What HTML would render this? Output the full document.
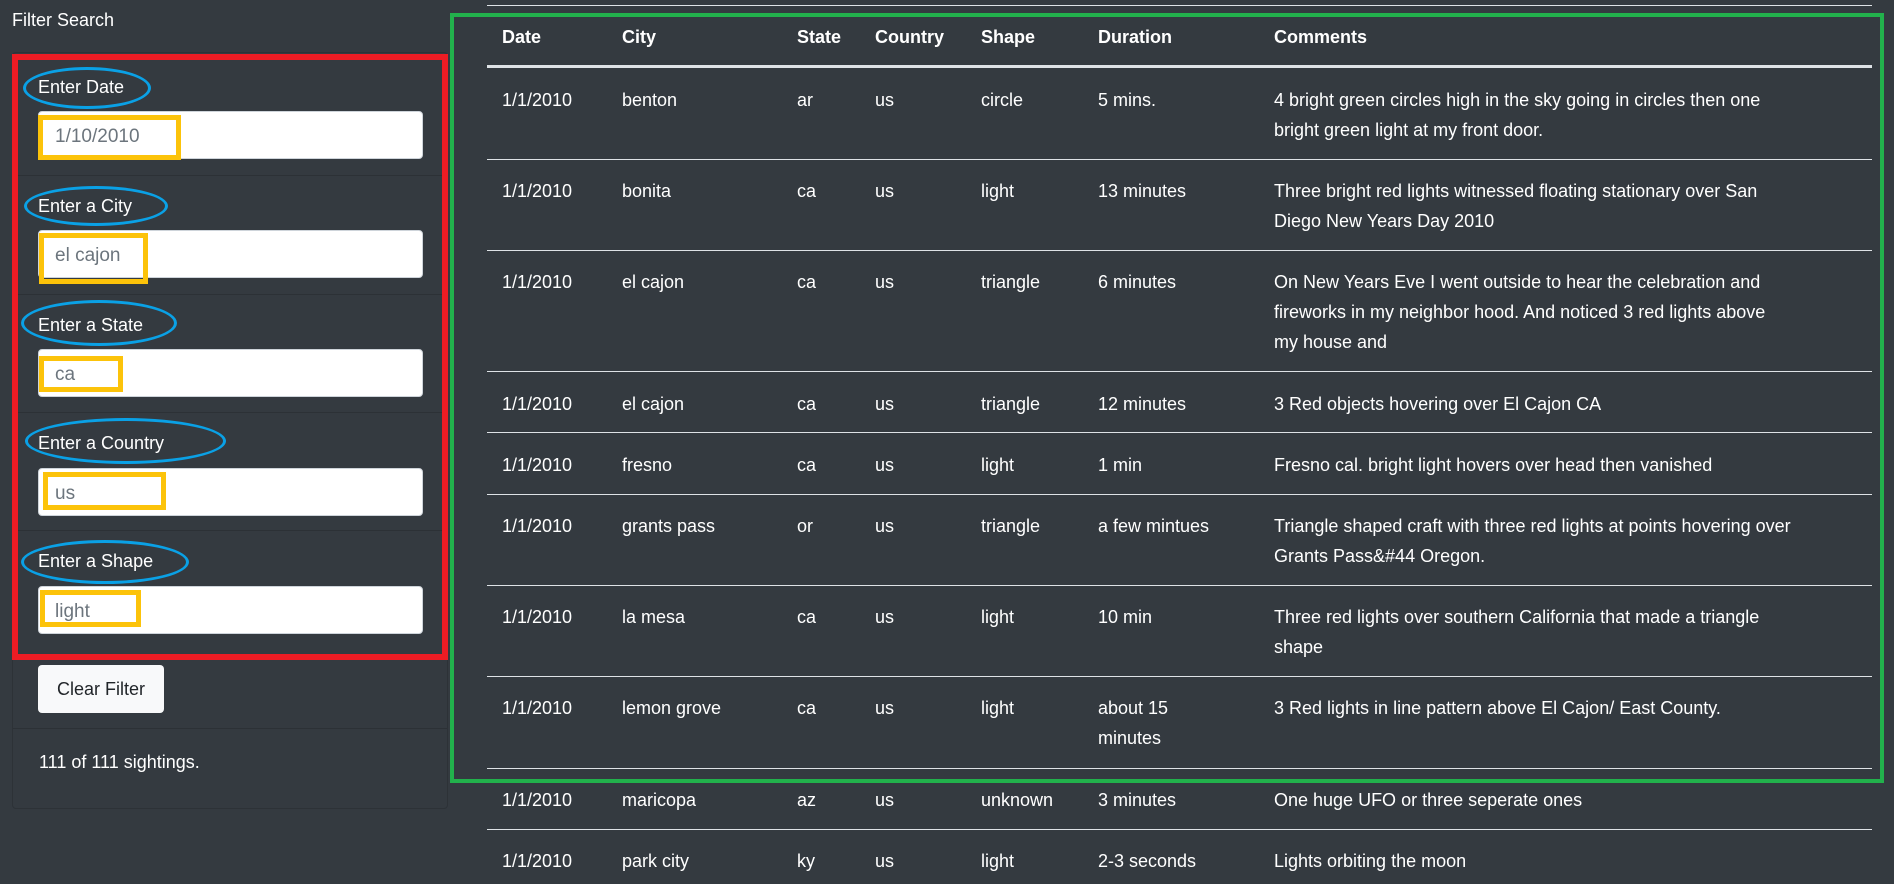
<!DOCTYPE html>
<html><head><meta charset="utf-8"><style>
*{box-sizing:border-box;margin:0;padding:0}
body{width:1894px;height:884px;background:#343a40;font-family:"Liberation Sans",sans-serif;color:#fff;position:relative;overflow:hidden;font-size:18px}
.a{position:absolute}
.card{left:12px;top:52px;width:436px;height:757px;border:1px solid #2d3237;border-radius:4px}
.div{left:13px;width:434px;height:1px;background:#2c3136}
.lbl{left:38px;font-size:18px;line-height:22px}
.inp{left:38px;width:385px;height:48px;background:#fff;border:1px solid #ced4da;border-radius:4px}
.val{color:#6c757d;font-size:19px}
.ell{border:3px solid #0aa1e6;border-radius:50%}
.yb{border:5px solid #fcc30a}
.hl{left:487px;width:1385px;height:1px;background:#dee2e6}
.c{position:absolute;line-height:30px;white-space:nowrap}
.m{width:560px}
</style></head><body>
<div class="a" style="left:12px;top:10px;font-size:18px">Filter Search</div>
<div class="a card"></div>
<div class="a div" style="top:175px"></div>
<div class="a div" style="top:294px"></div>
<div class="a div" style="top:412px"></div>
<div class="a div" style="top:530px"></div>
<div class="a div" style="top:728px"></div>

<div class="a lbl" style="top:76px">Enter Date</div>
<div class="a lbl" style="top:195px">Enter a City</div>
<div class="a lbl" style="top:314px">Enter a State</div>
<div class="a lbl" style="top:432px">Enter a Country</div>
<div class="a lbl" style="top:550px">Enter a Shape</div>

<div class="a inp" style="top:111px"></div>
<div class="a inp" style="top:230px"></div>
<div class="a inp" style="top:349px"></div>
<div class="a inp" style="top:468px"></div>
<div class="a inp" style="top:586px"></div>

<div class="a val" style="left:55px;top:126px">1/10/2010</div>
<div class="a val" style="left:55px;top:245px">el cajon</div>
<div class="a val" style="left:55px;top:364px">ca</div>
<div class="a val" style="left:55px;top:483px">us</div>
<div class="a val" style="left:55px;top:601px">light</div>

<div class="a ell" style="left:23px;top:67px;width:128px;height:42px"></div>
<div class="a ell" style="left:24px;top:186px;width:144px;height:40px"></div>
<div class="a ell" style="left:21px;top:300px;width:156px;height:46px"></div>
<div class="a ell" style="left:25px;top:418px;width:201px;height:46px"></div>
<div class="a ell" style="left:21px;top:540px;width:168px;height:44px"></div>

<div class="a yb" style="left:38px;top:115px;width:143px;height:45px"></div>
<div class="a yb" style="left:39px;top:233px;width:109px;height:51px"></div>
<div class="a yb" style="left:39px;top:356px;width:84px;height:36px"></div>
<div class="a yb" style="left:43px;top:472px;width:123px;height:38px"></div>
<div class="a yb" style="left:40px;top:590px;width:101px;height:37px"></div>

<div class="a" style="left:12px;top:54px;width:436px;height:606px;border:6px solid #ed1c24"></div>

<div class="a" style="left:38px;top:665px;width:126px;height:48px;background:#f8f9fa;border-radius:4px;color:#212529;line-height:48px;text-align:center">Clear Filter</div>
<div class="a" style="left:39px;top:752px">111 of 111 sightings.</div>

<div class="a hl" style="top:5px"></div>
<div class="a hl" style="top:65px;height:3px"></div>
<div class="a hl" style="top:159px"></div>
<div class="a hl" style="top:250px"></div>
<div class="a hl" style="top:371px"></div>
<div class="a hl" style="top:432px"></div>
<div class="a hl" style="top:494px"></div>
<div class="a hl" style="top:585px"></div>
<div class="a hl" style="top:676px"></div>
<div class="a hl" style="top:768px"></div>
<div class="a hl" style="top:829px"></div>

<div class="a" style="left:0;top:22px;font-weight:bold">
<span class="c" style="left:502px">Date</span><span class="c" style="left:622px">City</span><span class="c" style="left:797px">State</span><span class="c" style="left:875px">Country</span><span class="c" style="left:981px">Shape</span><span class="c" style="left:1098px">Duration</span><span class="c" style="left:1274px">Comments</span></div>

<div class="a" style="left:0;top:85px"><span class="c" style="left:502px">1/1/2010</span><span class="c" style="left:622px">benton</span><span class="c" style="left:797px">ar</span><span class="c" style="left:875px">us</span><span class="c" style="left:981px">circle</span><span class="c" style="left:1098px">5 mins.</span><span class="c m" style="left:1274px">4 bright green circles high in the sky going in circles then one<br>bright green light at my front door.</span></div>
<div class="a" style="left:0;top:176px"><span class="c" style="left:502px">1/1/2010</span><span class="c" style="left:622px">bonita</span><span class="c" style="left:797px">ca</span><span class="c" style="left:875px">us</span><span class="c" style="left:981px">light</span><span class="c" style="left:1098px">13 minutes</span><span class="c m" style="left:1274px">Three bright red lights witnessed floating stationary over San<br>Diego New Years Day 2010</span></div>
<div class="a" style="left:0;top:267px"><span class="c" style="left:502px">1/1/2010</span><span class="c" style="left:622px">el cajon</span><span class="c" style="left:797px">ca</span><span class="c" style="left:875px">us</span><span class="c" style="left:981px">triangle</span><span class="c" style="left:1098px">6 minutes</span><span class="c m" style="left:1274px">On New Years Eve I went outside to hear the celebration and<br>fireworks in my neighbor hood. And noticed 3 red lights above<br>my house and</span></div>
<div class="a" style="left:0;top:389px"><span class="c" style="left:502px">1/1/2010</span><span class="c" style="left:622px">el cajon</span><span class="c" style="left:797px">ca</span><span class="c" style="left:875px">us</span><span class="c" style="left:981px">triangle</span><span class="c" style="left:1098px">12 minutes</span><span class="c m" style="left:1274px">3 Red objects hovering over El Cajon CA</span></div>
<div class="a" style="left:0;top:450px"><span class="c" style="left:502px">1/1/2010</span><span class="c" style="left:622px">fresno</span><span class="c" style="left:797px">ca</span><span class="c" style="left:875px">us</span><span class="c" style="left:981px">light</span><span class="c" style="left:1098px">1 min</span><span class="c m" style="left:1274px">Fresno cal. bright light hovers over head then vanished</span></div>
<div class="a" style="left:0;top:511px"><span class="c" style="left:502px">1/1/2010</span><span class="c" style="left:622px">grants pass</span><span class="c" style="left:797px">or</span><span class="c" style="left:875px">us</span><span class="c" style="left:981px">triangle</span><span class="c" style="left:1098px">a few mintues</span><span class="c m" style="left:1274px">Triangle shaped craft with three red lights at points hovering over<br>Grants Pass&amp;#44 Oregon.</span></div>
<div class="a" style="left:0;top:602px"><span class="c" style="left:502px">1/1/2010</span><span class="c" style="left:622px">la mesa</span><span class="c" style="left:797px">ca</span><span class="c" style="left:875px">us</span><span class="c" style="left:981px">light</span><span class="c" style="left:1098px">10 min</span><span class="c m" style="left:1274px">Three red lights over southern California that made a triangle<br>shape</span></div>
<div class="a" style="left:0;top:693px"><span class="c" style="left:502px">1/1/2010</span><span class="c" style="left:622px">lemon grove</span><span class="c" style="left:797px">ca</span><span class="c" style="left:875px">us</span><span class="c" style="left:981px">light</span><span class="c" style="left:1098px">about 15<br>minutes</span><span class="c m" style="left:1274px">3 Red lights in line pattern above El Cajon/ East County.</span></div>
<div class="a" style="left:0;top:785px"><span class="c" style="left:502px">1/1/2010</span><span class="c" style="left:622px">maricopa</span><span class="c" style="left:797px">az</span><span class="c" style="left:875px">us</span><span class="c" style="left:981px">unknown</span><span class="c" style="left:1098px">3 minutes</span><span class="c m" style="left:1274px">One huge UFO or three seperate ones</span></div>
<div class="a" style="left:0;top:846px"><span class="c" style="left:502px">1/1/2010</span><span class="c" style="left:622px">park city</span><span class="c" style="left:797px">ky</span><span class="c" style="left:875px">us</span><span class="c" style="left:981px">light</span><span class="c" style="left:1098px">2-3 seconds</span><span class="c m" style="left:1274px">Lights orbiting the moon</span></div>

<div class="a" style="left:450px;top:13px;width:1434px;height:770px;border:4px solid #22b14c"></div>
</body></html>
